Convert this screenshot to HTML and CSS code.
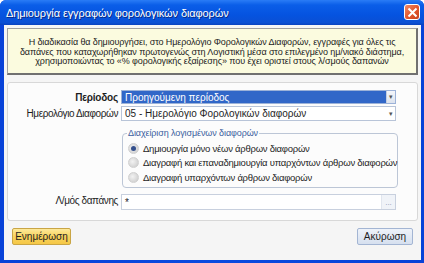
FILE: index.html
```html
<!DOCTYPE html>
<html lang="el">
<head>
    <meta charset="UTF-8">
    <title>Δημιουργία εγγραφών φορολογικών διαφορών</title>
    <link rel="stylesheet" href="styles.css">
</head>
<body>
    <div class="window">
        <div class="titlebar">
            <span class="title">Δημιουργία εγγραφών φορολογικών διαφορών</span>
            <span class="close-btn">
                <svg width="11" height="11" viewBox="0 0 11 11"><path d="M1.5 1.5 L9.5 9.5 M9.5 1.5 L1.5 9.5" stroke="#fff" stroke-width="2"/></svg>
            </span>
        </div>
        <div class="client">
            <div class="info">
                Η διαδικασία θα δημιουργήσει, στο Ημερολόγιο Φορολογικών Διαφορών, εγγραφές για όλες τις<br>
                δαπάνες που καταχωρήθηκαν πρωτογενώς στη Λογιστική μέσα στο επιλεγμένο ημ/νιακό διάστημα,<br>
                χρησιμοποιώντας το «% φορολογικής εξαίρεσης» που έχει οριστεί στους λ/σμούς δαπανών
            </div>

            <div class="panel">
                <div class="form-row">
                    <label class="bold">Περίοδος</label>
                    <div class="combo selected">
                        <span class="combo-text">Προηγούμενη περίοδος</span>
                        <span class="combo-btn">&#9662;</span>
                    </div>
                </div>
                <div class="form-row">
                    <label>Ημερολόγιο Διαφορών</label>
                    <div class="combo">
                        <span class="combo-text">05 - Ημερολόγιο Φορολογικών διαφορών</span>
                        <span class="combo-btn plain">&#9662;</span>
                    </div>
                </div>
                <div class="form-row">
                    <span></span>
                    <fieldset class="group">
                        <legend>Διαχείριση λογισμένων διαφορών</legend>
                        <div class="radio checked"><span class="dot"></span>Δημιουργία μόνο νέων άρθρων διαφορών</div>
                        <div class="radio"><span class="dot"></span>Διαγραφή και επαναδημιουργία υπαρχόντων άρθρων διαφορών</div>
                        <div class="radio"><span class="dot"></span>Διαγραφή υπαρχόντων άρθρων διαφορών</div>
                    </fieldset>
                </div>
                <div class="form-row">
                    <label>Λ/μός δαπάνης</label>
                    <div class="textbox">
                        <span class="combo-text">*</span>
                        <span class="dots-btn">...</span>
                    </div>
                </div>
            </div>

            <div class="buttons">
                <button class="btn btn-yellow">Ενημέρωση</button>
                <button class="btn btn-blue">Ακύρωση</button>
            </div>
        </div>
    </div>
</body>
</html>
```

FILE: styles.css
```css
body {
    margin: 0;
    font-family: "Liberation Sans", Arial, sans-serif;
    font-size: 10px;
    color: #1e1e1e;
}
.window {
    width: 424px;
    height: 263px;
    box-sizing: border-box;
    display: flex;
    flex-direction: column;
    background: linear-gradient(to right, #0842d8, #0a4be0 50%, #0842d8);
    border-radius: 6px 6px 0 0;
}
.titlebar {
    height: 25px;
    flex: none;
    display: flex;
    align-items: center;
    justify-content: space-between;
    padding: 0 4px 0 6px;
    background: linear-gradient(#2a7cf6, #0a5ee8 20%, #0553e0 60%, #0a4fd4 90%, #0842c0);
    border-radius: 6px 6px 0 0;
}
.title {
    color: #fff;
    font-family: "Liberation Sans", Arial, sans-serif;
    font-size: 11px;
    letter-spacing: -0.1px;
    text-shadow: 1px 1px 0 #0a2a80;
}
.close-btn {
    width: 16px;
    height: 16px;
    box-sizing: border-box;
    display: flex;
    align-items: center;
    justify-content: center;
    border: 1px solid #fff;
    border-radius: 3px;
    background: linear-gradient(135deg, #f08a66, #e2552b 55%, #c7401b);
    margin-top: -1px;
}
.client {
    flex: 1;
    margin: 0 3px 3px 4px;
    background: #f5f5f5;
    padding: 3px 3px 0 3px;
    display: flex;
    flex-direction: column;
}
.info {
    height: 47px;
    box-sizing: border-box;
    background: #fbfbdf;
    border: 1px solid #a0a0a0;
    border-right: 2px solid #707070;
    border-bottom: 2px solid #707070;
    text-align: center;
    font-size: 9px;
    line-height: 9.6px;
    padding-top: 9px;
    color: #222;
    letter-spacing: -0.1px;
}
.panel {
    margin-top: 7px;
    height: 139px;
    box-sizing: border-box;
    background: #fcfcfc;
    border: 1px solid #d8d8d8;
    border-radius: 3px;
    padding-top: 7px;
}
.form-row {
    display: grid;
    grid-template-columns: 110px 275px;
    column-gap: 3px;
    align-items: center;
    margin-bottom: 2px;
}
.form-row label {
    text-align: right;
    white-space: nowrap;
    letter-spacing: -0.4px;
}
.form-row label.bold {
    font-weight: bold;
    letter-spacing: -0.2px;
}
.combo, .textbox {
    height: 15px;
    box-sizing: border-box;
    display: flex;
    align-items: center;
    border: 1px solid #b8c4d8;
    background: #fff;
    padding-left: 3px;
}
.combo.selected {
    background: #3167c8;
    border-color: #9cb2d8;
    color: #fff;
    height: 14px;
}
.combo-text {
    flex: 1;
    white-space: nowrap;
}
.combo-btn {
    width: 8px;
    height: 100%;
    display: flex;
    align-items: center;
    justify-content: center;
    font-size: 7px;
    color: #555;
    background: linear-gradient(#f4f6fa, #dce3ee);
    border-left: 1px solid #c4cede;
}
.combo-btn.plain {
    background: #fff;
    border-left: none;
}
.group {
    margin: 5px 0 0 1px;
    padding: 3px 0 2px 5px;
    height: 60px;
    box-sizing: border-box;
    border: 1px solid #bcc6d6;
    border-radius: 4px;
}
.group legend {
    color: #3b5e9e;
    font-size: 9px;
    letter-spacing: -0.1px;
    padding: 0 1px;
    margin-left: -1px;
}
.radio {
    display: flex;
    align-items: center;
    height: 14.5px;
    white-space: nowrap;
    font-size: 9.5px;
    letter-spacing: -0.25px;
}
.dot {
    width: 9px;
    height: 9px;
    flex: none;
    border-radius: 50%;
    background: radial-gradient(circle at 40% 40%, #f2f2f2, #c8c8c8);
    border: 1px solid #d0d0d0;
    margin-right: 4px;
    position: relative;
}
.radio.checked .dot::after {
    content: "";
    position: absolute;
    left: 2px;
    top: 2px;
    width: 5px;
    height: 5px;
    border-radius: 50%;
    background: #34508c;
}
.textbox {
    height: 16px;
    margin-top: 4px;
    border-color: #c8d0de;
}
.dots-btn {
    width: 13px;
    height: 100%;
    text-align: center;
    color: #8a9ab4;
    font-size: 8px;
    line-height: 16px;
    background: #f0f3f8;
    border-left: 1px solid #e0e5ee;
}
.buttons {
    display: flex;
    justify-content: space-between;
    padding: 7px 5px 0 5px;
}
.btn {
    height: 17px;
    font-family: "Liberation Sans", Arial, sans-serif;
    font-size: 10px;
    color: #1e1e1e;
    border-radius: 2px;
    padding: 0;
}
.btn-yellow {
    width: 59px;
    background: linear-gradient(#fde99a, #f8d35e 50%, #f5c746);
    border: 1px solid #c9a545;
}
.btn-blue {
    width: 56px;
    background: linear-gradient(#eef2f9, #d6e0ef);
    border: 1px solid #a3b5d3;
}
```
